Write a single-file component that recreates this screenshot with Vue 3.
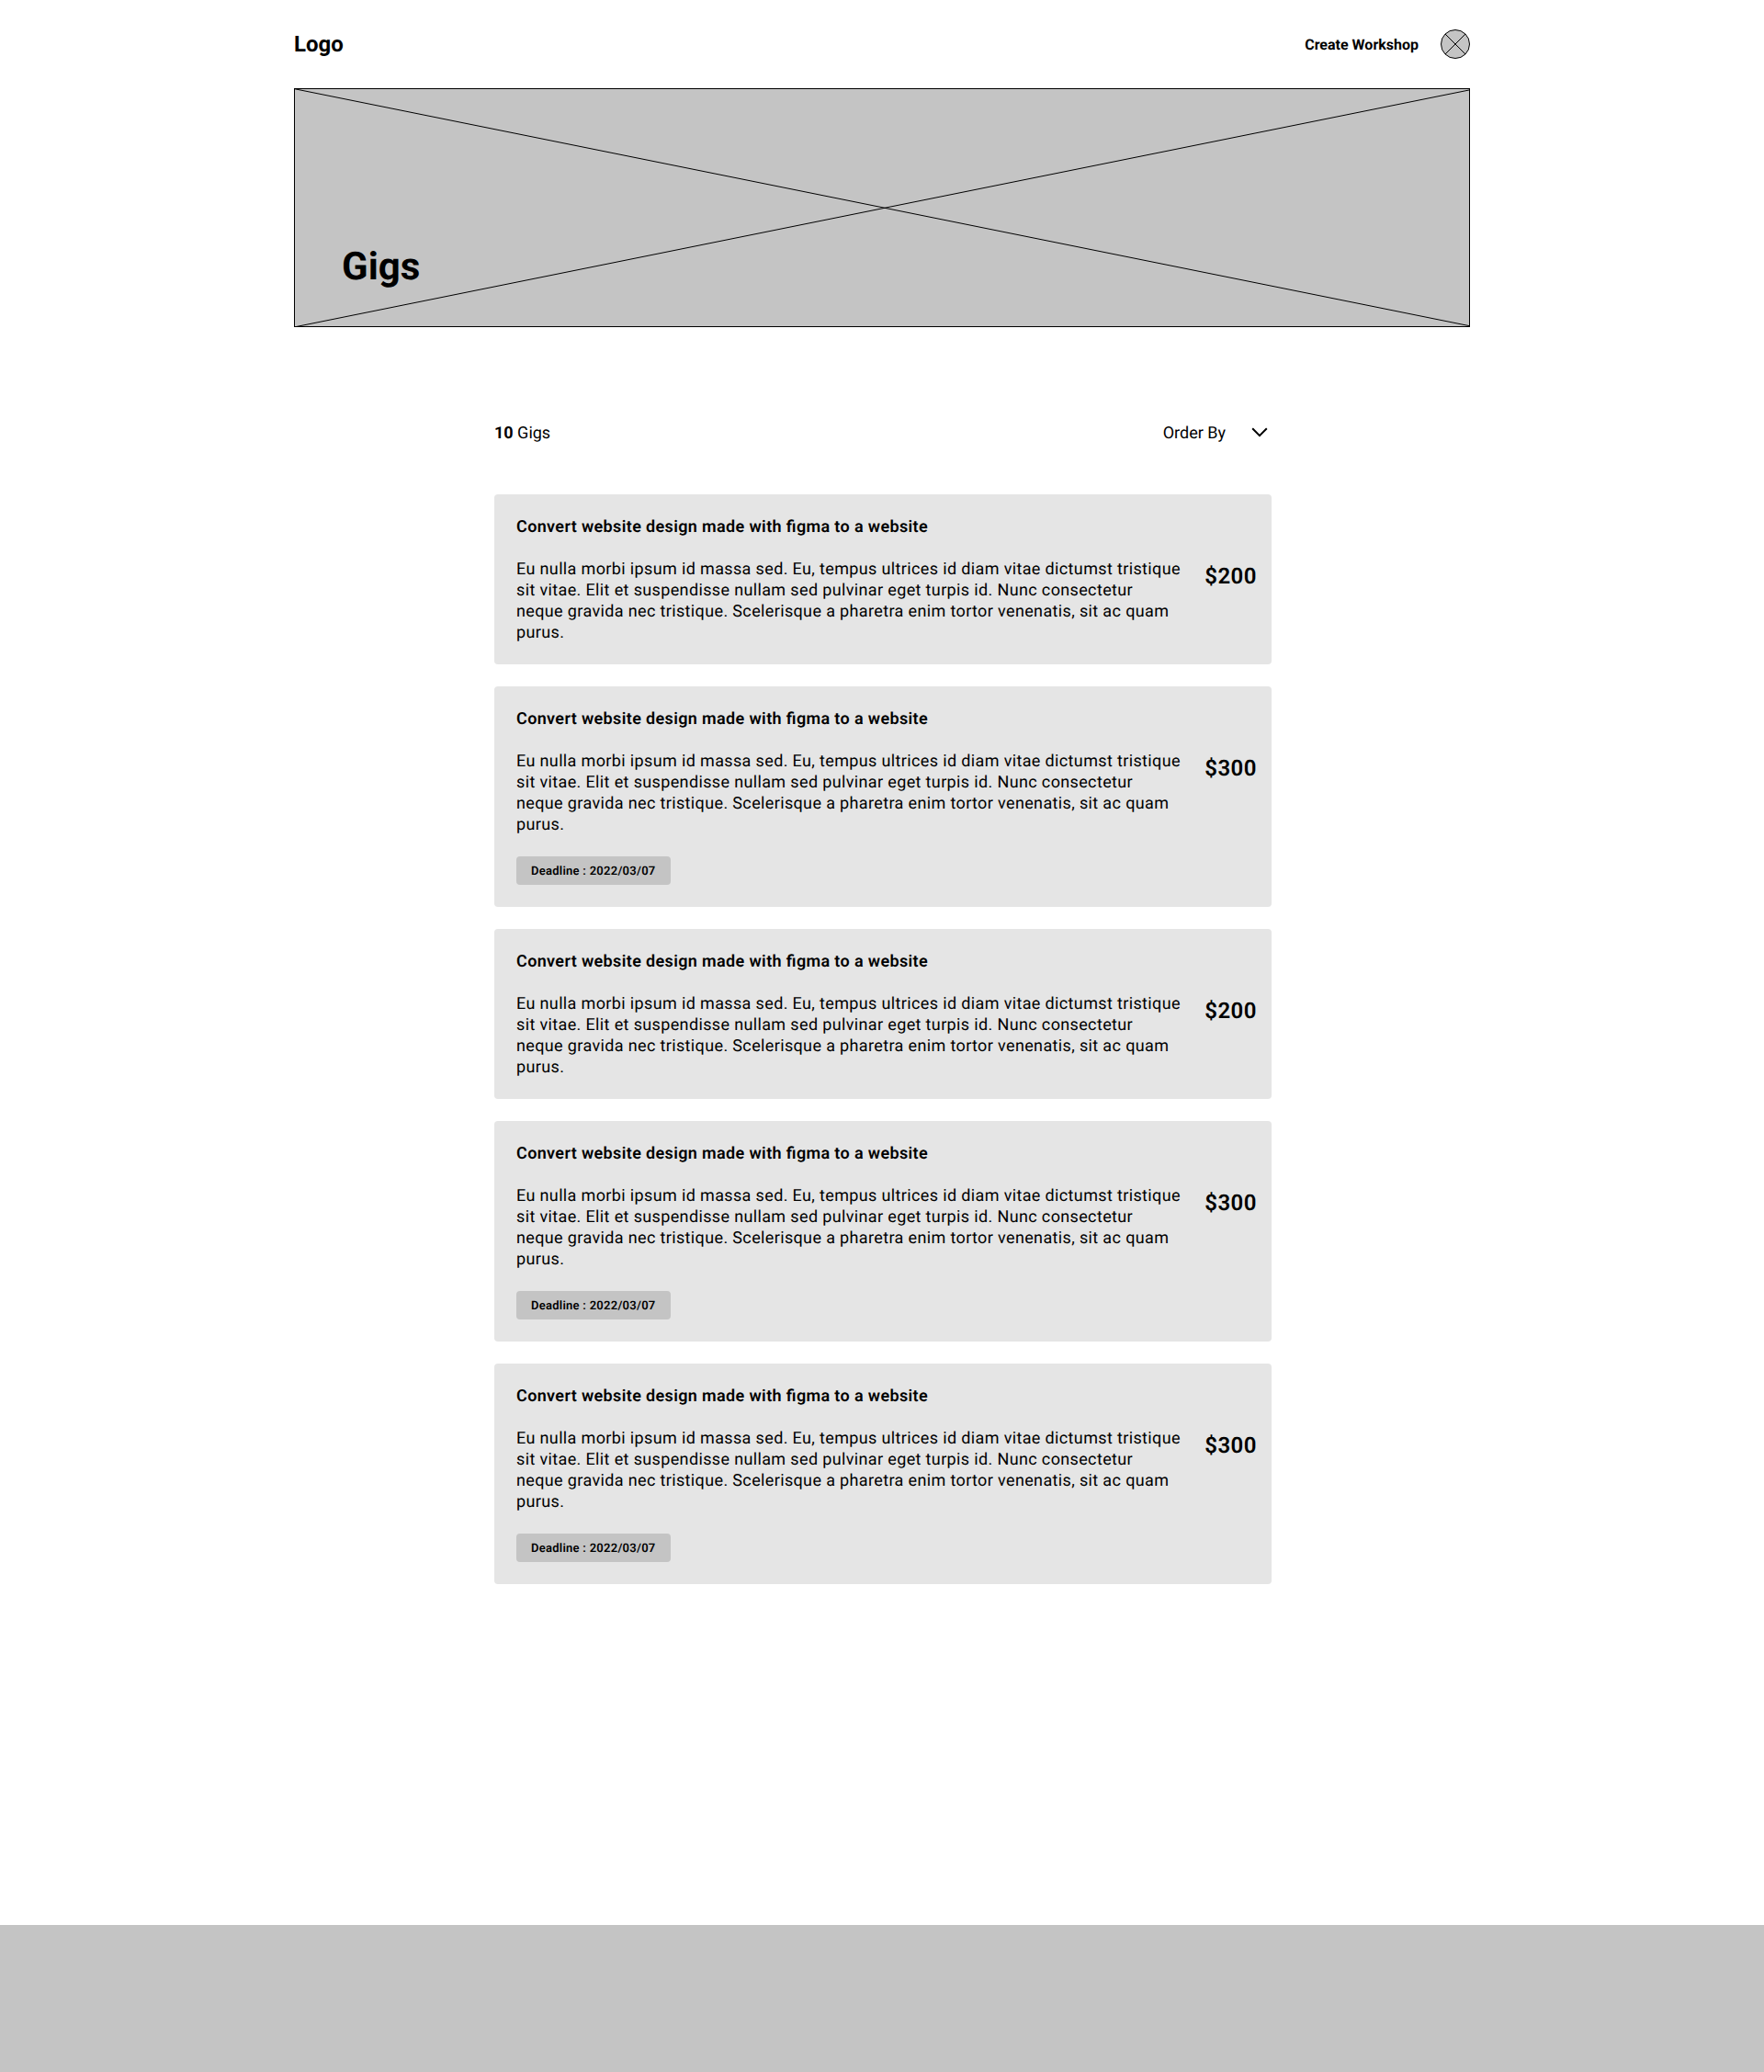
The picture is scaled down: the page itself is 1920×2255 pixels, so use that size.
<script setup>
const description =
  'Eu nulla morbi ipsum id massa sed. Eu, tempus ultrices id diam vitae dictumst tristique sit vitae. Elit et suspendisse nullam sed pulvinar eget turpis id. Nunc consectetur neque gravida nec tristique. Scelerisque a pharetra enim tortor venenatis, sit ac quam purus.'
const title = 'Convert website design made with figma to a website'

const gigs = [
  { id: 1, price: '$200' },
  { id: 2, price: '$300', deadline: '2022/03/07' },
  { id: 3, price: '$200' },
  { id: 4, price: '$300', deadline: '2022/03/07' },
  { id: 5, price: '$300', deadline: '2022/03/07' },
]
</script>

<template>
  <div class="page">
    <header class="header">
      <span class="logo">Logo</span>
      <nav class="nav">
        <a class="create">Create Workshop</a>
        <svg class="avatar" width="32" height="32" viewBox="0 0 32 32">
          <circle cx="16" cy="16" r="15.5" fill="#c4c4c4" stroke="#000" />
          <path d="M5 5 27 27M27 5 5 27" stroke="#000" />
        </svg>
      </nav>
    </header>

    <section class="banner">
      <svg class="cross" width="1280" height="260" viewBox="0 0 1280 260">
        <path d="M1 .8 1280 258.8M1 259.8 1280 1.8" stroke="#000" fill="none" />
      </svg>
      <h1 class="heading">Gigs</h1>
    </section>

    <main class="content">
      <div class="toolbar">
        <span class="label"><b class="count">10</b> Gigs</span>
        <div class="order">
          <span class="label">Order By</span>
          <svg width="18" height="11" viewBox="0 0 18 11">
            <path d="M1.2 1.3 9 9.1 16.8 1.3" fill="none" stroke="#000" stroke-width="2" />
          </svg>
        </div>
      </div>

      <article v-for="gig in gigs" :key="gig.id" class="card">
        <div class="info">
          <h2 class="title">{{ title }}</h2>
          <p class="description">{{ description }}</p>
          <span v-if="gig.deadline" class="deadline">Deadline : {{ gig.deadline }}</span>
        </div>
        <span class="price">{{ gig.price }}</span>
      </article>
    </main>

    <footer class="footer"></footer>
  </div>
</template>

<style>
body {
  margin: 0;
  background: #fff;
}
</style>

<style scoped>
.page {
  display: flex;
  flex-direction: column;
  min-height: 2255px;
  font-family: Roboto, sans-serif;
  color: #000;
  text-rendering: geometricPrecision;
}
.header {
  display: flex;
  align-items: center;
  justify-content: space-between;
  width: 1280px;
  height: 96px;
  margin: 0 auto;
}
.logo {
  font-size: 24px;
  line-height: 28px;
  font-weight: 700;
}
.nav {
  display: flex;
  align-items: center;
  gap: 24px;
}
.create {
  padding-top: 2px;
  font-size: 16px;
  line-height: 20px;
  font-weight: 700;
}
.avatar {
  display: block;
}
.banner {
  position: relative;
  box-sizing: border-box;
  display: flex;
  align-items: flex-end;
  width: 1280px;
  height: 260px;
  margin: 0 auto;
  padding: 0 51px 40px;
  border: 1px solid #000;
  background: #c4c4c4;
}
.cross {
  position: absolute;
  top: -1px;
  left: -1px;
}
.heading {
  position: relative;
  margin: 0;
  font-size: 42px;
  line-height: 49px;
  font-weight: 700;
}
.content {
  display: flex;
  flex-direction: column;
  gap: 24px;
  width: 846px;
  margin: 104px 0 0 538px;
}
.toolbar {
  display: flex;
  align-items: center;
  justify-content: space-between;
  height: 21px;
  margin-bottom: 33px;
  padding-right: 4px;
  font-size: 18px;
  line-height: 21px;
}
.label {
  padding-top: 2px;
}
.count {
  font-weight: 700;
}
.order {
  display: flex;
  align-items: center;
  gap: 28px;
}
.card {
  display: flex;
  justify-content: space-between;
  align-items: flex-start;
  padding: 24px 16px 24px 24px;
  border-radius: 4px;
  background: #e5e5e5;
}
.info {
  display: flex;
  flex-direction: column;
  align-items: flex-start;
  gap: 24px;
  width: 725px;
}
.title {
  margin: 0;
  padding-top: 1px;
  font-size: 18px;
  line-height: 21px;
  font-weight: 600;
  letter-spacing: 0.02em;
  font-feature-settings: "liga" 1;
}
.description {
  margin: 0 0 -1px;
  font-size: 18px;
  line-height: 23px;
  letter-spacing: 0.02em;
}
.deadline {
  padding: 9px 16px 7px;
  border-radius: 4px;
  background: #c4c4c4;
  font-size: 13px;
  line-height: 15px;
  font-weight: 600;
  letter-spacing: 0.02em;
}
.price {
  margin-top: 51px;
  font-size: 24px;
  line-height: 28px;
  font-weight: 600;
  letter-spacing: 0.02em;
}
.footer {
  height: 160px;
  margin-top: auto;
  background: #c4c4c4;
}
</style>
